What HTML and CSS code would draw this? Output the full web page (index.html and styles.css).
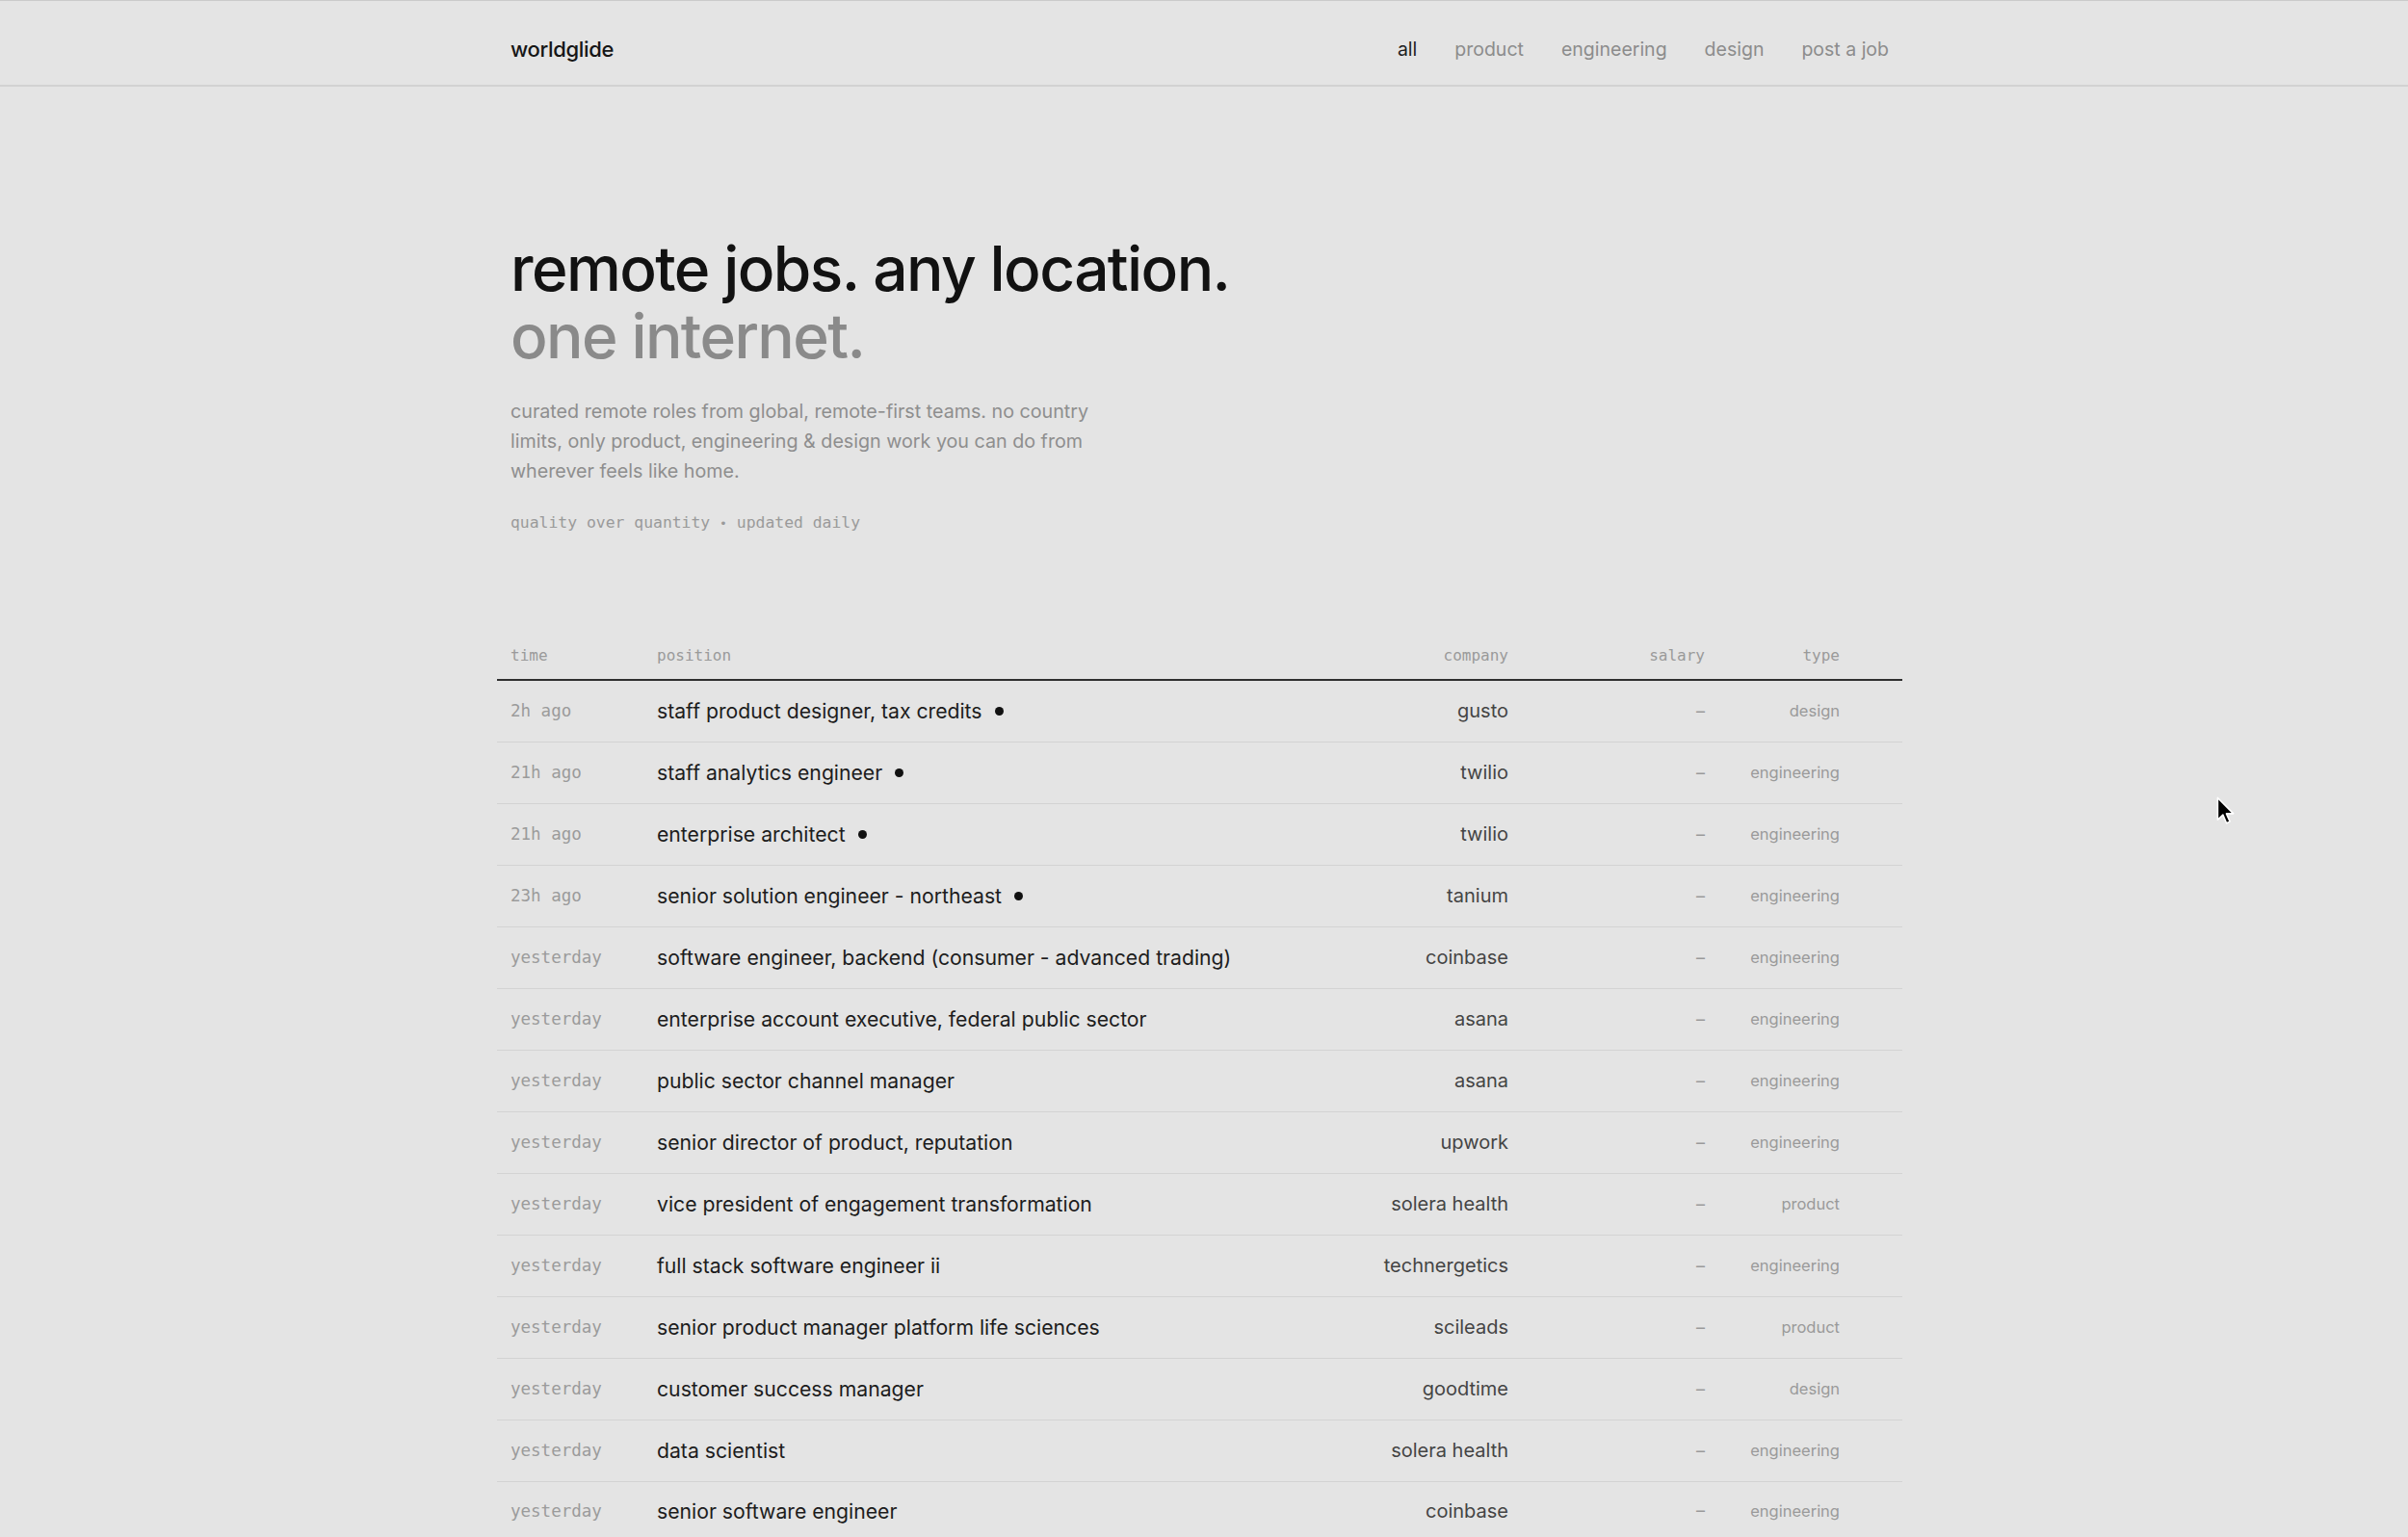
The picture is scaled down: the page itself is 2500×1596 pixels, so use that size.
FILE: index.html
```html
<!DOCTYPE html>
<html lang="en">
<head>
<meta charset="utf-8">
<title>worldglide — remote jobs</title>
<link rel="stylesheet" href="styles.css">
</head>
<body>
<header class="site-header">
  <div class="wrap header-inner">
    <a class="logo" href="#">worldglide</a>
    <nav class="nav">
      <a class="nav-link active" href="#">all</a>
      <a class="nav-link" href="#">product</a>
      <a class="nav-link" href="#">engineering</a>
      <a class="nav-link" href="#">design</a>
      <a class="nav-link" href="#">post a job</a>
    </nav>
  </div>
</header>

<main class="wrap">
  <section class="hero">
    <h1 class="hero-title">remote jobs. any location.<br><span class="muted">one internet.</span></h1>
    <p class="hero-text">curated remote roles from global, remote-first teams. no country limits, only product, engineering &amp; design work you can do from wherever feels like home.</p>
    <p class="tagline">quality over quantity <span class="tag-dot">•</span> updated daily</p>
  </section>

  <section class="jobs">
    <div class="row head">
      <span class="c-time">time</span>
      <span class="c-pos">position</span>
      <span class="c-co">company</span>
      <span class="c-sal">salary</span>
      <span class="c-type">type</span>
      <span></span>
    </div>
    <div class="row"><span class="c-time">2h ago</span><span class="c-pos">staff product designer, tax credits <i class="new"></i></span><span class="c-co">gusto</span><span class="c-sal">–</span><span class="c-type">design</span><span></span></div>
    <div class="row"><span class="c-time">21h ago</span><span class="c-pos">staff analytics engineer <i class="new"></i></span><span class="c-co">twilio</span><span class="c-sal">–</span><span class="c-type">engineering</span><span></span></div>
    <div class="row"><span class="c-time">21h ago</span><span class="c-pos">enterprise architect <i class="new"></i></span><span class="c-co">twilio</span><span class="c-sal">–</span><span class="c-type">engineering</span><span></span></div>
    <div class="row"><span class="c-time">23h ago</span><span class="c-pos">senior solution engineer - northeast <i class="new"></i></span><span class="c-co">tanium</span><span class="c-sal">–</span><span class="c-type">engineering</span><span></span></div>
    <div class="row"><span class="c-time">yesterday</span><span class="c-pos">software engineer, backend (consumer - advanced trading)</span><span class="c-co">coinbase</span><span class="c-sal">–</span><span class="c-type">engineering</span><span></span></div>
    <div class="row"><span class="c-time">yesterday</span><span class="c-pos">enterprise account executive, federal public sector</span><span class="c-co">asana</span><span class="c-sal">–</span><span class="c-type">engineering</span><span></span></div>
    <div class="row"><span class="c-time">yesterday</span><span class="c-pos">public sector channel manager</span><span class="c-co">asana</span><span class="c-sal">–</span><span class="c-type">engineering</span><span></span></div>
    <div class="row"><span class="c-time">yesterday</span><span class="c-pos">senior director of product, reputation</span><span class="c-co">upwork</span><span class="c-sal">–</span><span class="c-type">engineering</span><span></span></div>
    <div class="row"><span class="c-time">yesterday</span><span class="c-pos">vice president of engagement transformation</span><span class="c-co">solera health</span><span class="c-sal">–</span><span class="c-type">product</span><span></span></div>
    <div class="row"><span class="c-time">yesterday</span><span class="c-pos">full stack software engineer ii</span><span class="c-co">technergetics</span><span class="c-sal">–</span><span class="c-type">engineering</span><span></span></div>
    <div class="row"><span class="c-time">yesterday</span><span class="c-pos">senior product manager platform life sciences</span><span class="c-co">scileads</span><span class="c-sal">–</span><span class="c-type">product</span><span></span></div>
    <div class="row"><span class="c-time">yesterday</span><span class="c-pos">customer success manager</span><span class="c-co">goodtime</span><span class="c-sal">–</span><span class="c-type">design</span><span></span></div>
    <div class="row"><span class="c-time">yesterday</span><span class="c-pos">data scientist</span><span class="c-co">solera health</span><span class="c-sal">–</span><span class="c-type">engineering</span><span></span></div>
    <div class="row last"><span class="c-time">yesterday</span><span class="c-pos">senior software engineer</span><span class="c-co">coinbase</span><span class="c-sal">–</span><span class="c-type">engineering</span><span></span></div>
  </section>
</main>

<svg class="cursor" width="20" height="30" viewBox="0 0 14 21" aria-hidden="true">
  <path d="M1 1 L1 17 L4.8 13.4 L7.4 19.4 L9.9 18.3 L7.3 12.5 L12.4 12.5 Z" fill="#000" stroke="#fff" stroke-width="1.1" stroke-linejoin="round"/>
</svg>
</body>
</html>
```

FILE: styles.css
```css
* { box-sizing: border-box; }

html, body {
  margin: 0;
  padding: 0;
  background: #e4e4e4;
  overflow: hidden;
}

body {
  font-family: "Inter", "Noto Sans", "Liberation Sans", sans-serif;
  color: #1a1a1a;
  height: 1596px;
  position: relative;
}

a { color: inherit; text-decoration: none; }

.wrap {
  width: 1431px;
  margin-left: calc(50% - 720px);
}

/* header */
.site-header {
  border-top: 1px solid #cacaca;
  border-bottom: 2px solid #d2d2d2;
  padding-top: 12px;
  height: 90px;
}

.header-inner {
  height: 75px;
  display: flex;
  align-items: center;
  justify-content: space-between;
}

.logo {
  font-size: 22px;
  font-weight: 500;
  letter-spacing: -0.015em;
  color: #161616;
}

.nav {
  display: flex;
  gap: 39px;
}

.nav-link {
  font-size: 19.5px;
  color: #8c8c8c;
}

.nav-link.active { color: #1e1e1e; }

/* hero */
.hero {
  padding-top: 154px;
}

.hero-title {
  margin: 0;
  font-size: 64px;
  line-height: 70px;
  font-weight: 500;
  letter-spacing: -0.025em;
  color: #121212;
}

.hero-title .muted { color: #8a8a8a; }

.hero-text {
  margin: 28px 0 0;
  max-width: 640px;
  font-size: 19.7px;
  line-height: 31px;
  color: #8e8e8e;
}

.tagline {
  margin: 25.5px 0 0;
  font-family: "DejaVu Sans Mono", "Liberation Mono", monospace;
  font-size: 16.4px;
  line-height: 24px;
  color: #9a9a9a;
}

.tag-dot { font-size: 13px; }

/* jobs table */
.jobs {
  margin: 101px -14px 0;
}

.row {
  display: grid;
  grid-template-columns: 152px 584px 300px 204px 140px 51px;
  align-items: center;
  height: 64px;
  padding: 0 14px;
  border-bottom: 1px solid #d3d3d3;
}

.row.last { height: 60px; border-bottom: 0; }

.row.head {
  height: auto;
  padding-top: 14px;
  padding-bottom: 14px;
  border-bottom: 2px solid #2f2f2f;
}

.row.head span {
  font-family: "DejaVu Sans Mono", "Liberation Mono", monospace;
  font-size: 16px;
  line-height: 20px;
  color: #9a9a9a;
}

.c-time {
  font-family: "DejaVu Sans Mono", "Liberation Mono", monospace;
  font-size: 17.5px;
  color: #9b9b9b;
}

.c-pos {
  font-size: 21.2px;
  color: #1c1c1c;
  white-space: nowrap;
  display: flex;
  align-items: center;
  gap: 13px;
}

.new {
  display: inline-block;
  width: 9px;
  height: 9px;
  border-radius: 50%;
  background: #111;
}

.c-co {
  text-align: right;
  font-size: 20px;
  color: #444;
}

.c-sal {
  text-align: right;
  font-size: 18px;
  color: #9a9a9a;
}

.c-type {
  text-align: right;
  font-size: 16.5px;
  color: #9a9a9a;
}

.cursor {
  position: absolute;
  left: 2301px;
  top: 827px;
}
```
